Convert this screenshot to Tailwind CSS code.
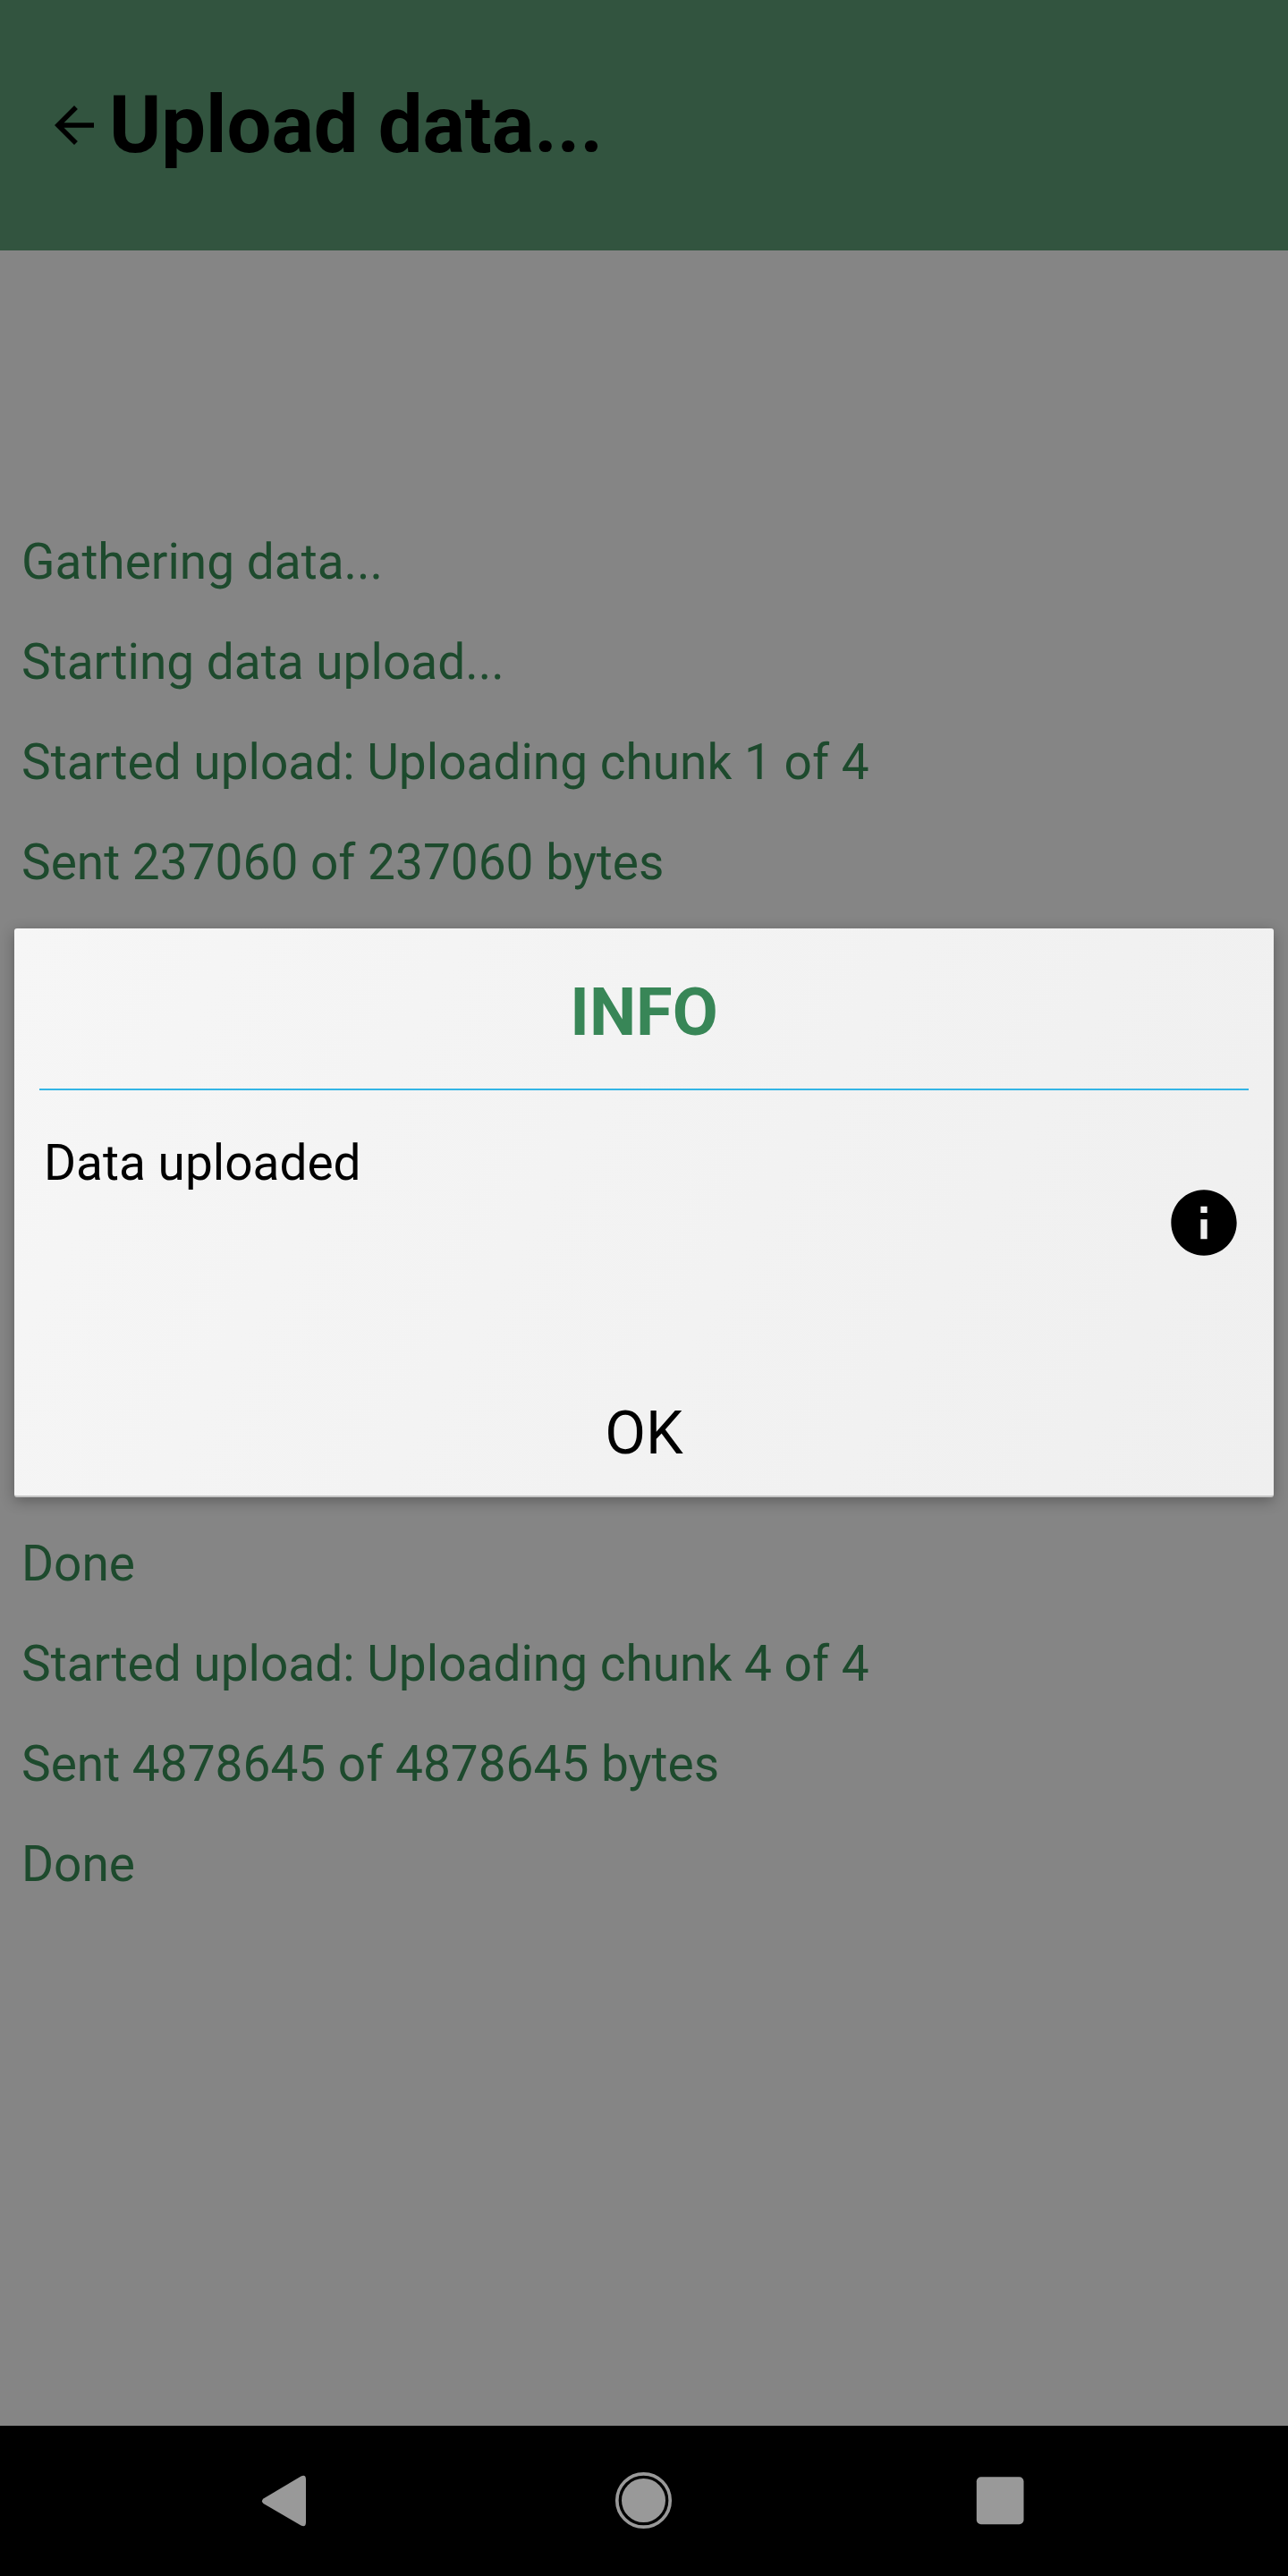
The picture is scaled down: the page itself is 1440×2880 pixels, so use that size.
<!DOCTYPE html>
<html lang="en">
<head>
<meta charset="utf-8">
<title>Upload data</title>
<script src="https://cdn.jsdelivr.net/npm/@tailwindcss/browser@4"></script>
</head>
<body class="bg-black font-['Roboto',sans-serif]">
<div class="relative flex h-[2880px] w-[1440px] flex-col overflow-hidden bg-[#858585]">
  <header class="flex h-[280px] items-center bg-[#32543f] pl-[50px] text-black">
    <svg class="h-[66px] w-[66px]" viewBox="0 0 24 24" fill="currentColor"><path d="M20 11H7.830l5.590-5.590L12 4l-8 8 8 8 1.410-1.410L7.830 13H20v-2z"/></svg>
    <h1 class="ml-[6px] text-[88.5px] leading-[104px] font-bold">Upload data...</h1>
  </header>
  <main class="flex-1 pt-[292px] pl-6 text-[55px] leading-[112px] text-[#1d4a2d]">
    <p>Gathering data...</p>
    <p>Starting data upload...</p>
    <p>Started upload: Uploading chunk 1 of 4</p>
    <p>Sent 237060 of 237060 bytes</p>
    <div class="h-[672px]"></div>
    <p>Done</p>
    <p>Started upload: Uploading chunk 4 of 4</p>
    <p>Sent 4878645 of 4878645 bytes</p>
    <p>Done</p>
  </main>
  <nav class="flex h-[168px] items-center bg-black">
    <svg class="h-[168px] w-full" viewBox="0 0 1440 168" fill="#999999">
      <path d="M294.500 81.500L336.500 56.500Q342 54 342 60V108Q342 114 336.500 111.500L294.500 87Q291.500 84 294.500 81.500Z"/>
      <circle cx="719.500" cy="83.500" r="24.500"/>
      <circle cx="719.500" cy="83.500" r="29.700" fill="none" stroke="#999999" stroke-width="3.700"/>
      <rect x="1091.800" y="57.300" width="52.700" height="52.900" rx="5"/>
    </svg>
  </nav>
  <section class="absolute top-[1038px] left-4 flex h-[636px] w-[1408px] flex-col rounded-[3px] border-b-2 border-[#c4c4c4] bg-linear-[119deg,#f6f6f6,#efefef] px-7 shadow-[0_4px_16px_rgba(0,0,0,0.3)]">
    <h2 class="h-[181px] border-b-2 border-[#33b5e5] pt-[49px] text-center text-[74px] leading-[90px] font-bold text-[#388657]">INFO</h2>
    <div class="flex h-[262px] justify-between pt-[48px] pr-[6px] pl-[5px] text-black">
      <p class="text-[55px] leading-[66px]">Data uploaded</p>
      <svg class="mt-[56px] h-[88px] w-[88px]" viewBox="0 0 24 24" fill="currentColor"><path d="M12 2C6.480 2 2 6.480 2 12s4.480 10 10 10 10-4.480 10-10S17.520 2 12 2zm1 15h-2v-6h2v6zm0-8h-2V7h2v2z"/></svg>
    </div>
    <button class="mt-[82px] text-[66.5px] leading-[78px] text-black">OK</button>
  </section>
</div>
</body>
</html>
